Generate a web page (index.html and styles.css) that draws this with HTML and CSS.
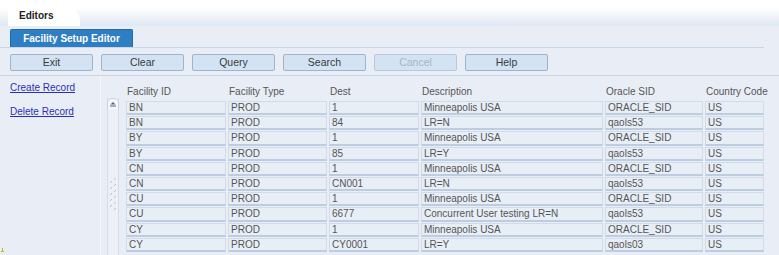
FILE: index.html
```html
<!DOCTYPE html>
<html>
<head>
<meta charset="utf-8">
<link rel="stylesheet" href="styles.css">
</head>
<body>
<div class="top">
  <div class="tab">Editors</div>
</div>
<div class="main">
  <div class="editor-bar">
    <div class="editor-btn">Facility Setup Editor</div>
  </div>
  <div class="toolbar">
    <div class="btn">Exit</div>
    <div class="btn">Clear</div>
    <div class="btn">Query</div>
    <div class="btn">Search</div>
    <div class="btn disabled">Cancel</div>
    <div class="btn">Help</div>
  </div>
  <div class="body">
    <div class="left">
      <a class="link" href="#">Create Record</a>
      <a class="link" href="#">Delete Record</a>
      <span class="marker"></span>
    </div>
    <div class="content">
      <div class="scroll">
        <div class="scroll-up">
          <svg width="12" height="12" viewBox="0 0 12 12"><path d="M0.5 11.5 V4 Q0.5 0.5 6 0.5 Q11.5 0.5 11.5 4 V11.5" fill="#f4f7fb" stroke="#c3d1e2"/><path d="M3.5 6.5 L6 4 L8.5 6.5 Z" fill="#5a6470"/><path d="M3 8 H9" stroke="#5a6470" stroke-width="1"/></svg>
        </div>
        <div class="grip">
          <svg width="10" height="34" viewBox="0 0 10 34">
            <g stroke="#b7c3d2" stroke-width="1">
              <path d="M6 2 L8 0"/><path d="M2 5 L4 3"/><path d="M6 8 L8 6"/><path d="M2 11 L4 9"/><path d="M6 14 L8 12"/><path d="M2 17 L4 15"/><path d="M6 20 L8 18"/><path d="M2 23 L4 21"/><path d="M6 26 L8 24"/><path d="M2 29 L4 27"/><path d="M6 32 L8 30"/>
            </g>
          </svg>
        </div>
      </div>
      <div class="grid">
        <div class="th">Facility ID</div><div class="th">Facility Type</div><div class="th">Dest</div><div class="th">Description</div><div class="th">Oracle SID</div><div class="th">Country Code</div>
        <div class="td">BN</div><div class="td">PROD</div><div class="td">1</div><div class="td">Minneapolis USA</div><div class="td">ORACLE_SID</div><div class="td">US</div>
        <div class="td">BN</div><div class="td">PROD</div><div class="td">84</div><div class="td">LR=N</div><div class="td">qaols53</div><div class="td">US</div>
        <div class="td">BY</div><div class="td">PROD</div><div class="td">1</div><div class="td">Minneapolis USA</div><div class="td">ORACLE_SID</div><div class="td">US</div>
        <div class="td">BY</div><div class="td">PROD</div><div class="td">85</div><div class="td">LR=Y</div><div class="td">qaols53</div><div class="td">US</div>
        <div class="td">CN</div><div class="td">PROD</div><div class="td">1</div><div class="td">Minneapolis USA</div><div class="td">ORACLE_SID</div><div class="td">US</div>
        <div class="td">CN</div><div class="td">PROD</div><div class="td">CN001</div><div class="td">LR=N</div><div class="td">qaols53</div><div class="td">US</div>
        <div class="td">CU</div><div class="td">PROD</div><div class="td">1</div><div class="td">Minneapolis USA</div><div class="td">ORACLE_SID</div><div class="td">US</div>
        <div class="td">CU</div><div class="td">PROD</div><div class="td">6677</div><div class="td">Concurrent User testing LR=N</div><div class="td">qaols53</div><div class="td">US</div>
        <div class="td">CY</div><div class="td">PROD</div><div class="td">1</div><div class="td">Minneapolis USA</div><div class="td">ORACLE_SID</div><div class="td">US</div>
        <div class="td">CY</div><div class="td">PROD</div><div class="td">CY0001</div><div class="td">LR=Y</div><div class="td">qaols03</div><div class="td">US</div>
      </div>
    </div>
  </div>
</div>
</body>
</html>
```
FILE: styles.css
```css
html, body {
  margin: 0;
  padding: 0;
  width: 779px;
  height: 255px;
  overflow: hidden;
  background: #e9eef6;
  font-family: "Liberation Sans", Arial, sans-serif;
  font-size: 10px;
}
.top {
  height: 26px;
  background: linear-gradient(#ffffff 0%, #ffffff 30%, #dfe7f2 100%);
  display: flex;
  align-items: flex-end;
  padding-left: 8px;
  box-sizing: border-box;
}
.tab {
  height: 21px;
  width: 72px;
  background: #ffffff;
  border-radius: 2px 16px 0 0;
  box-sizing: border-box;
  padding-left: 11px;
  padding-top: 5px;
  font-weight: bold;
  font-size: 10px;
  color: #222;
}
.main {
  background: #e9eef6;
}
.editor-bar {
  width: 764px;
  height: 22px;
  border-bottom: 1px solid #c8d7ea;
  box-sizing: border-box;
  padding: 3px 0 0 10px;
}
.editor-btn {
  width: 123px;
  height: 18px;
  box-sizing: border-box;
  background: #2d7ec2;
  border: 1px solid #2769a3;
  border-bottom: none;
  border-radius: 2px 2px 0 0;
  color: #fff;
  font-weight: bold;
  font-size: 10px;
  line-height: 17px;
  text-align: center;
}
.toolbar {
  display: flex;
  gap: 8px;
  height: 28px;
  box-sizing: border-box;
  padding: 6px 0 0 10px;
  border-bottom: 1px solid #c9d5e4;
}
.btn {
  width: 83px;
  height: 17px;
  box-sizing: border-box;
  background: #d4e3f4;
  border: 1px solid #9fb3cb;
  border-radius: 2px;
  color: #3a3a3a;
  text-align: center;
  line-height: 15px;
  font-size: 10.5px;
}
.btn.disabled {
  color: #a9b3bf;
  border-color: #b8c8dc;
}
.body {
  display: flex;
  height: 179px;
  overflow: hidden;
}
.left {
  width: 101px;
  border-right: 1px solid #f5f8fc;
  display: flex;
  flex-direction: column;
  padding: 5px 0 0 10px;
  box-sizing: border-box;
  gap: 11px;
  position: relative;
}
.link {
  color: #2b2fb8;
  text-decoration: underline;
  font-size: 10px;
  line-height: 13px;
}
.marker {
  position: absolute;
  left: 1px;
  top: 173px;
  width: 3px;
  height: 3px;
  border-bottom: 1px solid #c9b400;
  box-sizing: border-box;
}
.marker::before {
  content: "";
  position: absolute;
  left: 1px;
  top: -1px;
  width: 1px;
  height: 3px;
  background: #c9b400;
}
.content {
  display: flex;
  padding: 8px 0 0 6px;
  gap: 7px;
}
.scroll {
  width: 12px;
  margin-top: 14px;
  border-left: 1px solid #d3deea;
  border-right: 1px solid #d3deea;
  box-sizing: border-box;
  background: #edf1f7;
  height: 157px;
  display: flex;
  flex-direction: column;
  align-items: center;
}
.scroll-up {
  width: 12px;
  height: 12px;
  margin-left: -1px;
  margin-right: -1px;
}
.scroll-up svg {
  display: block;
}
.grip {
  margin-top: 68px;
}
.grip svg {
  display: block;
}
.grid {
  display: grid;
  grid-template-columns: 100px 99px 90px 182px 98px 59px;
  grid-auto-rows: 14.2px;
  grid-template-rows: 16px;
  column-gap: 2px;
  row-gap: 1px;
  align-content: start;
}
.th {
  color: #555;
  font-size: 10px;
  line-height: 16px;
  padding-left: 1px;
  white-space: nowrap;
}
.td {
  box-sizing: border-box;
  border: 1px solid #d0dcea;
  border-bottom: 2px solid #bccde1;
  background: #e8eef6;
  color: #555;
  font-size: 10px;
  line-height: 11px;
  padding-left: 2px;
  white-space: nowrap;
  overflow: hidden;
}
```
